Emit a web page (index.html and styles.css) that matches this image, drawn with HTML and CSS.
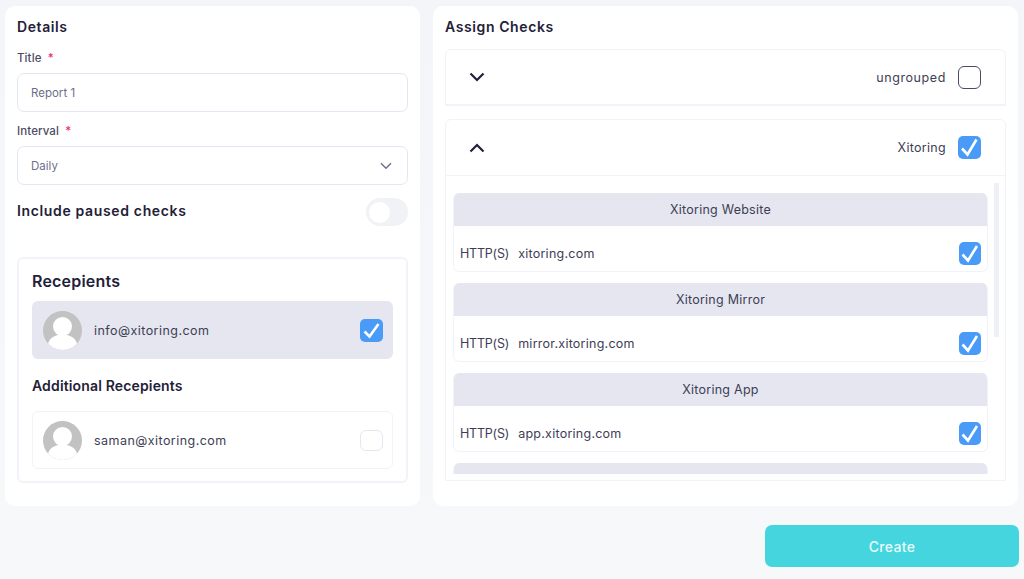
FILE: index.html
```html
<!DOCTYPE html>
<html lang="en">
<head>
<meta charset="utf-8">
<title>Create Report</title>
<link rel="stylesheet" href="styles.css">
</head>
<body>
<main class="page">
  <div class="columns">
    <section class="card details">
      <h2 class="card-title">Details</h2>
      <label class="field-label">Title <span class="req">*</span></label>
      <div class="control">Report 1</div>
      <label class="field-label second">Interval <span class="req">*</span></label>
      <div class="control select">Daily
        <svg class="select-arrow" viewBox="0 0 12 8" width="12" height="8"><path d="M1 1.200 6 6.200 11 1.200" fill="none" stroke="#6e6e8c" stroke-width="1.400"/></svg>
      </div>
      <div class="toggle-row">
        <span class="toggle-label">Include paused checks</span>
        <span class="toggle"><span class="knob"></span></span>
      </div>
      <div class="recipients">
        <h3 class="rec-title">Recepients</h3>
        <div class="rec-row selected">
          <svg class="avatar" viewBox="0 0 39 39" width="39" height="39"><defs><clipPath id="a1"><circle cx="19.500" cy="19.500" r="19.500"/></clipPath></defs><circle cx="19.500" cy="19.500" r="19.500" fill="#c2c2c2"/><g clip-path="url(#a1)" fill="#fff"><circle cx="19.500" cy="15.500" r="9.500"/><ellipse cx="19.500" cy="34" rx="14.500" ry="10.500"/></g></svg>
          <span class="rec-mail">info@xitoring.com</span>
          <span class="check on big"><svg viewBox="0 0 23 23"><path d="M4.500 12.500 9.500 17.500 18.500 5" fill="none" stroke="#fff" stroke-width="2.600"/></svg></span>
        </div>
        <h4 class="rec-sub">Additional Recepients</h4>
        <div class="rec-row plain">
          <svg class="avatar" viewBox="0 0 39 39" width="39" height="39"><defs><clipPath id="a2"><circle cx="19.500" cy="19.500" r="19.500"/></clipPath></defs><circle cx="19.500" cy="19.500" r="19.500" fill="#c2c2c2"/><g clip-path="url(#a2)" fill="#fff"><circle cx="19.500" cy="15.500" r="9.500"/><ellipse cx="19.500" cy="34" rx="14.500" ry="10.500"/></g></svg>
          <span class="rec-mail">saman@xitoring.com</span>
          <span class="check off"></span>
        </div>
      </div>
    </section>
    <section class="card assign">
      <h2 class="card-title">Assign Checks</h2>
      <div class="group closed">
        <div class="group-head">
          <svg class="chev" viewBox="0 0 16 10" width="16" height="10"><path d="M1.500 1.500 8 8 14.500 1.500" fill="none" stroke="#1f2138" stroke-width="2.200"/></svg>
          <span class="group-name">ungrouped</span>
          <span class="check outline"></span>
        </div>
      </div>
      <div class="group open">
        <div class="group-head">
          <svg class="chev" viewBox="0 0 16 10" width="16" height="10"><path d="M1.500 8.500 8 2 14.500 8.500" fill="none" stroke="#1f2138" stroke-width="2.200"/></svg>
          <span class="group-name">Xitoring</span>
          <span class="check on big"><svg viewBox="0 0 23 23"><path d="M4 12.500 9.500 18.500 18.500 3.500" fill="none" stroke="#fff" stroke-width="2.600"/></svg></span>
        </div>
        <div class="group-body">
          <div class="item">
            <div class="item-head">Xitoring Website</div>
            <div class="item-row"><span class="proto">HTTP(S)</span><span class="host">xitoring.com</span><span class="check on small"><svg viewBox="0 0 22 23"><path d="M3.500 12.500 9 18.500 18 4" fill="none" stroke="#fff" stroke-width="2.600"/></svg></span></div>
          </div>
          <div class="item">
            <div class="item-head">Xitoring Mirror</div>
            <div class="item-row"><span class="proto">HTTP(S)</span><span class="host">mirror.xitoring.com</span><span class="check on small"><svg viewBox="0 0 22 23"><path d="M3.500 12.500 9 18.500 18 4" fill="none" stroke="#fff" stroke-width="2.600"/></svg></span></div>
          </div>
          <div class="item">
            <div class="item-head">Xitoring App</div>
            <div class="item-row"><span class="proto">HTTP(S)</span><span class="host">app.xitoring.com</span><span class="check on small"><svg viewBox="0 0 22 23"><path d="M3.500 12.500 9 18.500 18 4" fill="none" stroke="#fff" stroke-width="2.600"/></svg></span></div>
          </div>
          <div class="item">
            <div class="item-head"></div>
          </div>
          <span class="scrollbar"></span>
        </div>
      </div>
    </section>
  </div>
  <div class="actions"><button class="create">Create</button></div>
</main>
</body>
</html>
```
FILE: styles.css
```css
* { box-sizing: border-box; }
html, body { margin: 0; height: 100%; }
body {
  background: linear-gradient(#f4f5f9, #f7f8fa);
  font-family: "Inter", "Open Sans", sans-serif;
  color: #1f2138;
  overflow: hidden;
}
.page { width: 1024px; height: 579px; padding: 6px 5px 0; }
.columns { display: flex; gap: 13px; }
.card {
  background: #fff;
  border-radius: 10px;
  height: 500px;
  padding: 12px 12px 0;
}
.details { width: 415px; }
.assign { width: 585px; }
.card-title {
  margin: 0;
  font-size: 14px;
  line-height: 18px;
  font-weight: 600;
  letter-spacing: 0.6px;
  color: #1f2138;
}
.field-label {
  display: block;
  margin-top: 14px;
  font-size: 11.500px;
  line-height: 16px;
  font-weight: 500;
  letter-spacing: 0.1px;
  color: #4b4c63;
}
.field-label.second { margin-top: 11px; }
.req { color: #f0286e; margin-left: 3px; }
.control {
  margin-top: 7px;
  width: 391px;
  height: 39px;
  border: 1px solid #e6e6f2;
  border-radius: 7px;
  padding: 0 13px;
  display: flex;
  align-items: center;
  justify-content: space-between;
  font-size: 11.500px;
  color: #6e6e8c;
}
.select-arrow { margin-right: 2px; }
.toggle-row {
  width: 391px;
  margin-top: 13px;
  height: 28px;
  display: flex;
  align-items: center;
  justify-content: space-between;
}
.toggle-label {
  margin-bottom: 3px;
  font-size: 14px;
  font-weight: 600;
  letter-spacing: 0.65px;
  color: #1f2138;
}
.toggle {
  width: 42px;
  height: 28px;
  border-radius: 14px;
  background: #f1f2f6;
  padding: 4px 3px;
}
.knob { display: block; width: 21px; height: 21px; border-radius: 50%; background: #fff; }
.recipients {
  margin-top: 31px;
  width: 391px;
  height: 226px;
  border: 2px solid #f2f3f8;
  border-radius: 6px;
  padding: 10px 13px 0;
}
.rec-title {
  margin: 0;
  font-size: 16px;
  line-height: 24px;
  font-weight: 600;
  letter-spacing: 0.2px;
  color: #1f2138;
}
.rec-sub {
  margin: 18px 0 16px;
  font-size: 14px;
  line-height: 18px;
  font-weight: 600;
  letter-spacing: 0.15px;
  color: #1f2138;
}
.rec-row {
  width: 361px;
  height: 58px;
  border-radius: 6px;
  padding: 0 10px 0 11px;
  display: flex;
  align-items: center;
}
.rec-row.selected { margin-top: 8px; background: #e5e6f0; }
.rec-row.plain { border: 1px solid #f2f3f8; padding: 0 9px 0 10px; }
.avatar { flex: none; }
.rec-mail { margin-left: 12px; flex: 1; font-size: 12.500px; letter-spacing: 0.45px; color: #3d3e55; }
.check { display: block; flex: none; border-radius: 5px; }
.check svg { display: block; width: 100%; height: 100%; }
.check.on { background: #4a9bf7; }
.check.big { width: 23px; height: 23px; }
.check.small { width: 22px; height: 23px; }
.check.off { width: 23px; height: 21px; border: 1px solid #e6e6f2; border-radius: 6px; }
.check.outline { width: 23px; height: 23px; border: 1.500px solid #4b4c63; border-radius: 6px; }
.group {
  margin-top: 13px;
  width: 561px;
  border: 1px solid #f2f3f8;
  border-radius: 6px 6px 0 0;
  background: #fff;
}
.group.closed { height: 57px; border-bottom-width: 2px; }
.group.open { height: 362px; }
.group-head {
  height: 56px;
  padding: 0 24px 0 23px;
  display: flex;
  align-items: center;
  border-bottom: 1px solid #f2f3f8;
}
.closed .group-head { height: 54px; border-bottom: 0; }
.chev { flex: none; }
.group-name {
  margin-left: auto;
  margin-right: 12px;
  font-size: 12.500px;
  letter-spacing: 0.3px;
  color: #3d3e55;
}
.closed .group-name { letter-spacing: 0.6px; }
.group-body {
  position: relative;
  height: 298px;
  overflow: hidden;
  padding: 17px 0 0 7px;
}
.scrollbar {
  position: absolute;
  right: 6px;
  top: 7px;
  width: 5px;
  height: 154px;
  background: #eff0f5;
}
.item {
  width: 535px;
  height: 79px;
  margin-bottom: 11px;
  border-radius: 6px;
  border: 1px solid #f2f3f8;
  border-top: 0;
  overflow: hidden;
}
.item-head {
  height: 33px;
  background: #e5e6f0;
  display: flex;
  align-items: center;
  justify-content: center;
  font-size: 12.500px;
  letter-spacing: 0.25px;
  color: #3d3e55;
}
.item-row {
  height: 45px;
  padding: 10px 6px 0;
  display: flex;
  align-items: center;
  font-size: 12.500px;
  color: #3d3e55;
}
.proto { letter-spacing: -0.2px; }
.host { margin-left: 9px; flex: 1; letter-spacing: 0.25px; }
.actions { display: flex; justify-content: flex-end; margin-top: 19px; }
.create {
  width: 254px;
  height: 42px;
  border: 0;
  border-radius: 7px;
  background: #45d5df;
  color: #e8fbfc;
  font-family: inherit;
  font-size: 14px;
  font-weight: 500;
  letter-spacing: 0.3px;
}
```
